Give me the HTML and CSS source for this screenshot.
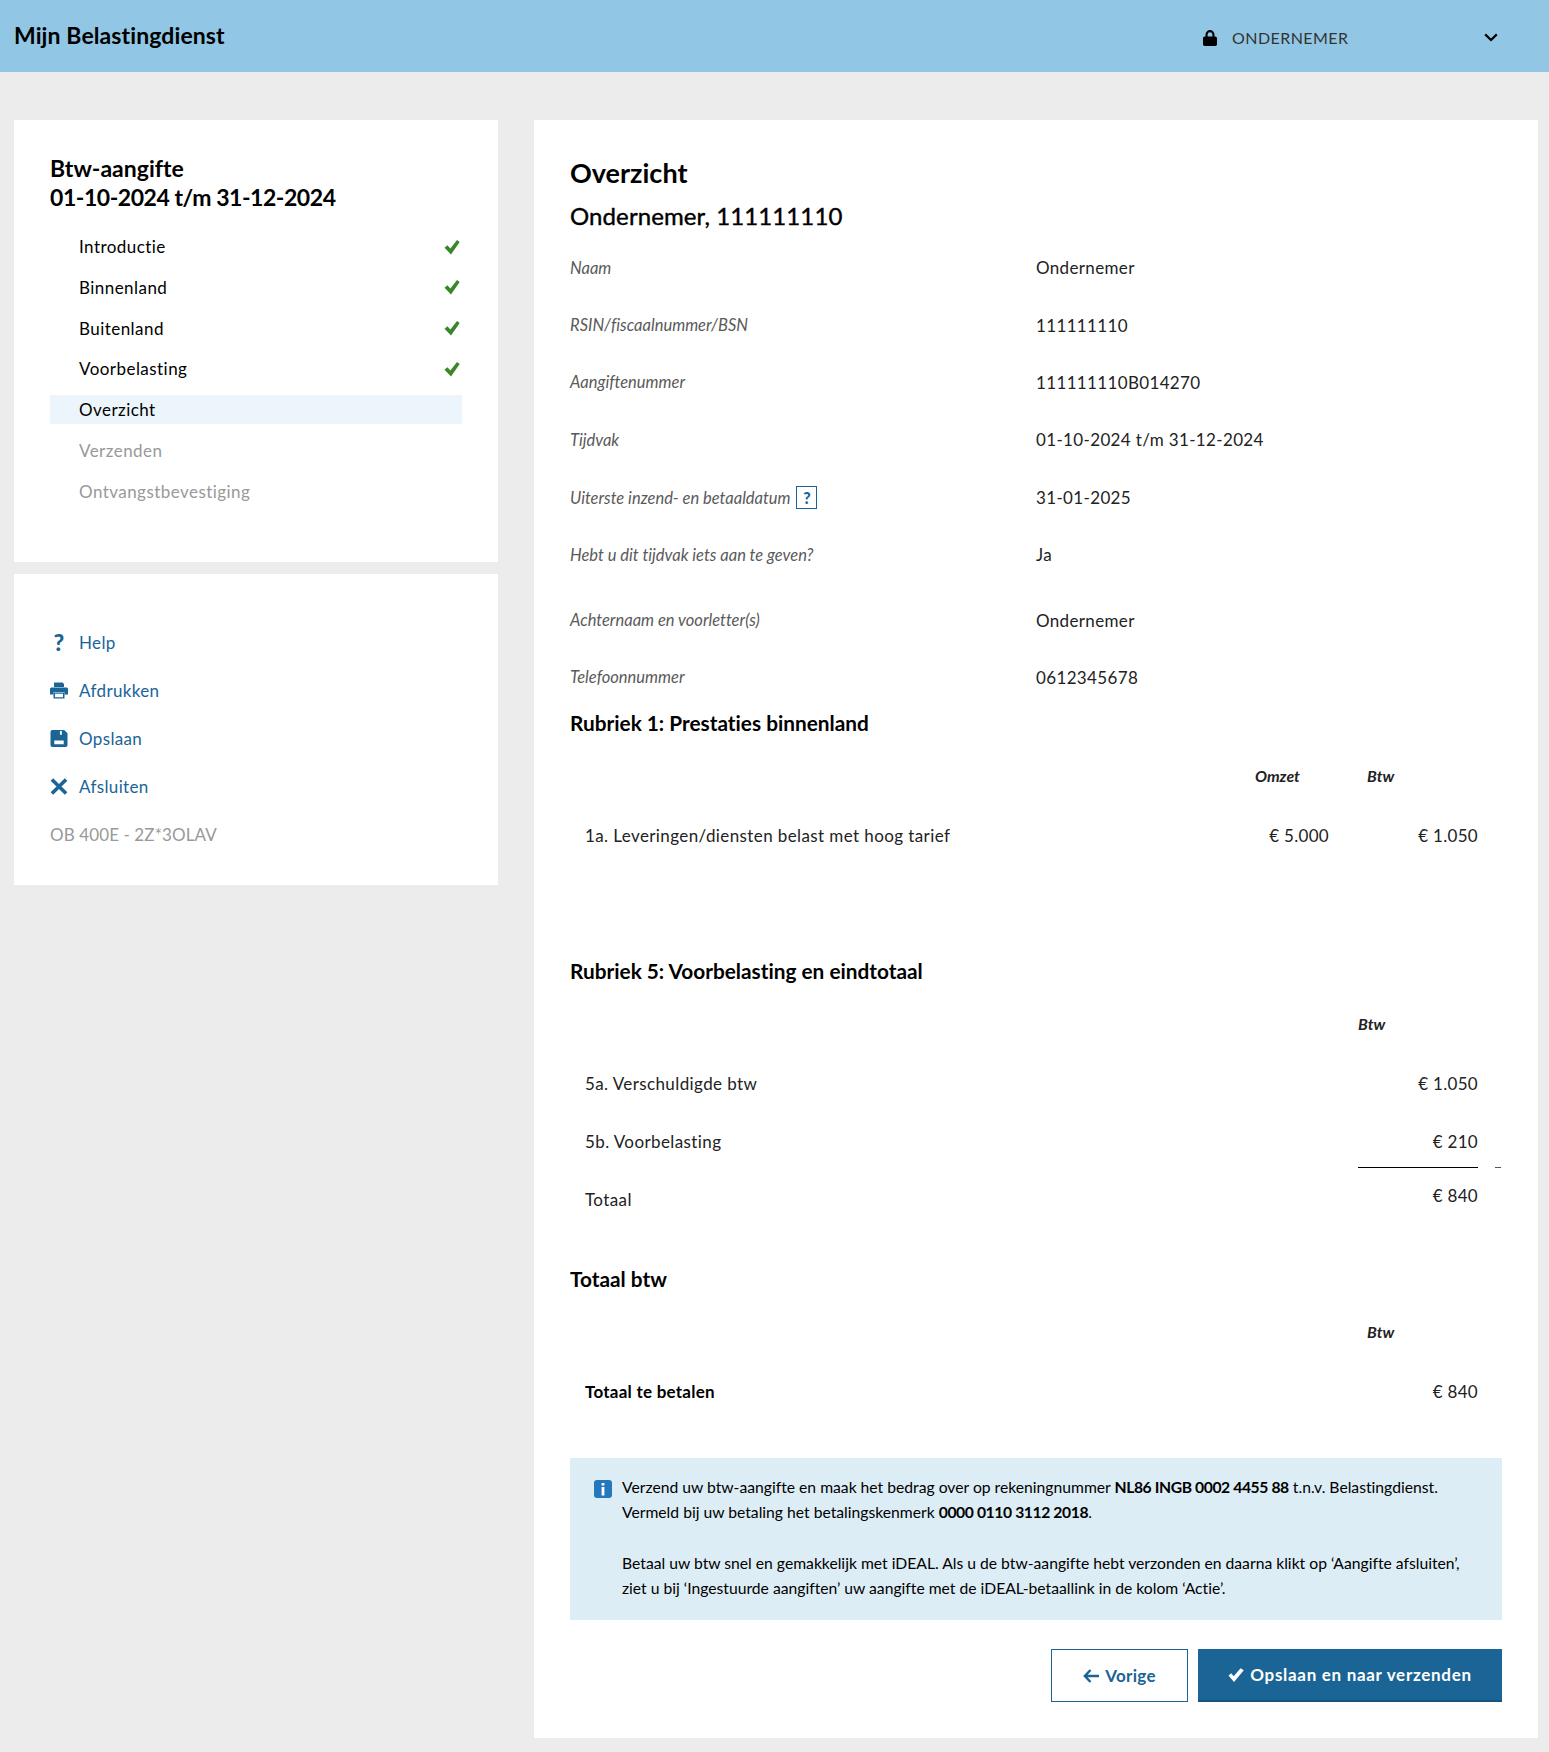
FILE: index.html
```html
<!DOCTYPE html>
<html lang="nl">
<head>
<meta charset="utf-8">
<title>Mijn Belastingdienst</title>
<link rel="stylesheet" href="styles.css">
</head>
<body>
<header class="topbar">
  <div class="brand">Mijn Belastingdienst</div>
  <div class="account">
    <svg class="lock" viewBox="0 0 14 16"><path d="M2.500 7V4.600a4.500 4.500 0 0 1 9 0V7H9.400V4.600a2.400 2.400 0 0 0-4.800 0V7z"/><rect x="0" y="6.500" width="14" height="9.500" rx="1.800"/></svg>
    <span class="account-name">ONDERNEMER</span>
    <svg class="chev" viewBox="0 0 14 9"><path d="M1.200 1.400 7 7l5.800-5.600" fill="none" stroke="#000" stroke-width="2.200"/></svg>
  </div>
</header>
<div class="layout">
  <aside class="sidebar">
    <section class="card nav-card">
      <h2 class="nav-title">Btw-aangifte<br><span class="nav-date">01-10-2024 t/m 31-12-2024</span></h2>
      <ul class="steps">
        <li class="step"><span>Introductie</span><svg class="tick" viewBox="0 0 16 16"><path d="M0.500 8.800 3.400 6.300l3 3.300L13 1l2.700 1.900L7 15.500z"/></svg></li>
        <li class="step"><span>Binnenland</span><svg class="tick" viewBox="0 0 16 16"><path d="M0.500 8.800 3.400 6.300l3 3.300L13 1l2.700 1.900L7 15.500z"/></svg></li>
        <li class="step"><span>Buitenland</span><svg class="tick" viewBox="0 0 16 16"><path d="M0.500 8.800 3.400 6.300l3 3.300L13 1l2.700 1.900L7 15.500z"/></svg></li>
        <li class="step"><span>Voorbelasting</span><svg class="tick" viewBox="0 0 16 16"><path d="M0.500 8.800 3.400 6.300l3 3.300L13 1l2.700 1.900L7 15.500z"/></svg></li>
        <li class="step step-current"><span>Overzicht</span></li>
        <li class="step step-off"><span>Verzenden</span></li>
        <li class="step step-off"><span>Ontvangstbevestiging</span></li>
      </ul>
    </section>
    <section class="card tools-card">
      <a class="tool"><span class="tool-icon tool-q">?</span>Help</a>
      <a class="tool"><svg class="tool-icon" viewBox="0 0 18 16"><path d="M4 0h8.500L14 1.500V4.500H4z"/><path fill-rule="evenodd" d="M1.500 5h15A1.500 1.500 0 0 1 18 6.500V12h-3.500V9.500h-11V12H0V6.500A1.500 1.500 0 0 1 1.500 5z"/><path fill-rule="evenodd" d="M3.500 10h11v6h-11zm1.500 1.300v3.400h8v-3.400z"/></svg>Afdrukken</a>
      <a class="tool"><svg class="tool-icon" viewBox="0 0 18 18"><path fill-rule="evenodd" d="M2 0h12.500L18 3.500V16a2 2 0 0 1-2 2H2a2 2 0 0 1-2-2V2a2 2 0 0 1 2-2zm8 1v4h2V1zM4 11v4h10v-4z"/></svg>Opslaan</a>
      <a class="tool"><svg class="tool-icon" viewBox="0 0 18 18"><path d="M1.500 1.500 16.500 16.500M16.500 1.500 1.500 16.500" fill="none" stroke="#1a6496" stroke-width="3.800"/></svg>Afsluiten</a>
      <div class="form-code">OB 400E - 2Z*3OLAV</div>
    </section>
  </aside>
  <main class="card content">
    <h1 class="page-title">Overzicht</h1>
    <h2 class="subject">Ondernemer, 111111110</h2>
    <dl class="facts">
      <div class="fact"><dt>Naam</dt><dd>Ondernemer</dd></div>
      <div class="fact"><dt>RSIN/fiscaalnummer/BSN</dt><dd>111111110</dd></div>
      <div class="fact"><dt>Aangiftenummer</dt><dd>111111110B014270</dd></div>
      <div class="fact"><dt>Tijdvak</dt><dd>01-10-2024 t/m 31-12-2024</dd></div>
      <div class="fact"><dt>Uiterste inzend- en betaaldatum <span class="hint">?</span></dt><dd>31-01-2025</dd></div>
      <div class="fact fact-gap"><dt>Hebt u dit tijdvak iets aan te geven?</dt><dd>Ja</dd></div>
      <div class="fact"><dt>Achternaam en voorletter(s)</dt><dd>Ondernemer</dd></div>
      <div class="fact"><dt>Telefoonnummer</dt><dd>0612345678</dd></div>
    </dl>

    <h3 class="section-title">Rubriek 1: Prestaties binnenland</h3>
    <div class="tbl tbl-two">
      <div></div><div class="th">Omzet</div><div class="th th-btw">Btw</div>
      <div class="cell">1a. Leveringen/diensten belast met hoog tarief</div><div class="cell num">€ 5.000</div><div class="cell num">€ 1.050</div>
    </div>

    <h3 class="section-title section-far">Rubriek 5: Voorbelasting en eindtotaal</h3>
    <div class="tbl tbl-one">
      <div></div><div class="th">Btw</div>
      <div class="cell">5a. Verschuldigde btw</div><div class="cell num">€ 1.050</div>
      <div class="cell">5b. Voorbelasting</div><div class="cell num cell-sum">€ 210</div>
      <div class="cell">Totaal</div><div class="cell num cell-total">€ 840</div>
    </div>

    <h3 class="section-title section-mid">Totaal btw</h3>
    <div class="tbl tbl-one">
      <div></div><div class="th th-total">Btw</div>
      <div class="cell cell-strong">Totaal te betalen</div><div class="cell num">€ 840</div>
    </div>

    <div class="notice">
      <svg class="notice-icon" viewBox="0 0 18 18"><rect width="18" height="18" rx="3" fill="#2678bd"/><rect x="7.600" y="3" width="2.800" height="2.500" fill="#fff"/><rect x="7.600" y="7" width="2.800" height="8.500" fill="#fff"/></svg>
      <div class="notice-text">
        <p>Verzend uw btw-aangifte en maak het bedrag over op rekeningnummer <b>NL86 INGB 0002 4455 88</b> t.n.v. Belastingdienst.<br>Vermeld bij uw betaling het betalingskenmerk <b>0000 0110 3112 2018</b>.</p>
        <p>Betaal uw btw snel en gemakkelijk met iDEAL. Als u de btw-aangifte hebt verzonden en daarna klikt op ‘Aangifte afsluiten’,<br>ziet u bij ‘Ingestuurde aangiften’ uw aangifte met de iDEAL-betaallink in de kolom ‘Actie’.</p>
      </div>
    </div>

    <div class="actions">
      <button class="btn btn-back"><svg class="btn-icon" viewBox="0 0 16 14"><path d="M7.500 1 1.800 7l5.700 6M2 7h14" fill="none" stroke="#1a6496" stroke-width="2.400"/></svg>Vorige</button>
      <button class="btn btn-next"><svg class="btn-icon" viewBox="0 0 16 14"><path d="M0.500 7.500 3.200 5.300l2.500 3L12.600 0.300 15.800 2.300 6 14z" fill="#fff"/></svg>Opslaan en naar verzenden</button>
    </div>
  </main>
</div>
</body>
</html>
```
FILE: styles.css
```css
* { box-sizing: border-box; }
html, body { margin: 0; padding: 0; }
body {
  background: #ececec;
  color: #000;
  font-family: "Lato", "Noto Sans", sans-serif;
  font-size: 17px;
  font-variant-ligatures: none;
  height: 1752px;
}
h1, h2, h3, p, ul, dl, dd { margin: 0; padding: 0; }
ul { list-style: none; }

.topbar {
  height: 72px;
  background: #91c7e4;
  display: flex;
  align-items: center;
  justify-content: space-between;
  padding: 0 51px 0 14px;
}
.brand { font-size: 23px; font-weight: 700; letter-spacing: 0.1px; margin-top: -2px; }
.account { display: flex; align-items: center; margin-top: 3px; }
.lock { width: 14px; height: 16px; fill: #000; margin-right: 15px; }
.account-name { font-size: 16px; letter-spacing: 0.45px; color: #333; width: 252px; }
.chev { width: 14px; height: 9px; }

.layout {
  display: flex;
  align-items: flex-start;
  gap: 36px;
  padding: 48px 11px 14px 14px;
}
.card { background: #fff; }
.sidebar { width: 484px; display: flex; flex-direction: column; gap: 12px; }

.nav-card { padding: 34px 36px 56px; }
.nav-title { font-size: 23px; line-height: 29px; font-weight: 700; }
.nav-date { letter-spacing: -0.45px; }
.steps { margin-top: 20px; display: flex; flex-direction: column; gap: 11.8px; }
.step {
  height: 29px;
  padding: 0 2px 0 29px;
  display: flex;
  align-items: center;
  justify-content: space-between;
  letter-spacing: 0.45px;
}
.step-current { background: #ecf5fb; }
.step-off { color: #999; }
.tick { width: 16px; height: 16px; fill: #39872a; }

.tools-card { padding: 57px 36px 38px; display: flex; flex-direction: column; gap: 24px; }
.tool {
  height: 24px;
  display: flex;
  align-items: center;
  color: #1a6496;
  letter-spacing: 0.35px;
}
.tool-icon { width: 18px; height: 17px; margin-right: 11px; fill: #1a6496; flex: none; }
.tool-q { font-weight: 900; font-size: 23px; text-align: center; line-height: 17px; }
.form-code { height: 24px; line-height: 24px; color: #999; letter-spacing: 0.1px; }

.content { width: 1004px; height: 1618px; padding: 36px; }
.page-title { font-size: 27px; line-height: 34px; font-weight: 700; }
.subject {
  font-size: 24px;
  line-height: 32px;
  font-weight: 400;
  margin-top: 10px;
  letter-spacing: 0.1px;
  -webkit-text-stroke: 0.4px #000;
}

.facts { margin-top: 7px; }
.fact {
  height: 57.4px;
  display: grid;
  grid-template-columns: 466px 1fr;
  align-items: center;
}
.fact-gap { height: 65.4px; padding-bottom: 8px; }
.fact dt { font-style: italic; color: #5a5a5a; font-size: 16.5px; }
.fact dd { color: #222; letter-spacing: 0.35px; }
.hint {
  display: inline-block;
  width: 21px;
  height: 23px;
  border: 1px solid #1a6496;
  color: #1a6496;
  font-style: normal;
  font-weight: 900;
  font-size: 16px;
  line-height: 21px;
  text-align: center;
  margin-left: 2px;
}

.section-title { font-size: 20.8px; line-height: 26px; font-weight: 700; margin-top: 4px; }
.section-far { margin-top: 94px; }
.section-mid { margin-top: 38px; }

.tbl { display: grid; margin-top: 12px; padding: 0 24px 0 15px; grid-auto-rows: 58px; align-items: center; }
.tbl-two { grid-template-columns: 1fr 74px 149px; }
.tbl-one { grid-template-columns: 1fr 120px; }
.th { font-style: italic; font-weight: 700; font-size: 16px; color: #222; margin-top: -3px; }
.th-btw { padding-left: 38px; }
.th-total { padding-left: 9px; }
.cell { color: #222; letter-spacing: 0.4px; }
.num { text-align: right; letter-spacing: 0.3px; }
.cell-strong { font-weight: 700; color: #000; letter-spacing: 0.25px; }
.cell-sum {
  position: relative;
  align-self: start;
  height: 56px;
  padding-top: 3px;
  display: flex;
  align-items: center;
  justify-content: flex-end;
  border-bottom: 1px solid #000;
}
.cell-sum::after {
  content: "";
  position: absolute;
  right: -23px;
  bottom: -1px;
  width: 6px;
  height: 1px;
  background: #555;
}
.cell-total { padding-bottom: 8px; }

.notice {
  margin-top: 38px;
  height: 162px;
  padding: 17px 24px 0;
  background: #ddedf5;
  display: flex;
  gap: 11px;
}
.notice-icon { width: 18px; height: 18px; margin-top: 5px; flex: none; margin-right: -1px; }
.notice-text { font-size: 15.7px; line-height: 25px; flex: 1; }
.notice-text p + p { margin-top: 25.5px; }
.notice-text b { font-weight: 700; letter-spacing: -0.4px; }

.actions { margin-top: 29px; display: flex; justify-content: flex-end; gap: 10px; }
.btn {
  height: 53px;
  font-family: inherit;
  font-size: 17px;
  font-weight: 700;
  letter-spacing: 0.3px;
  display: flex;
  align-items: center;
  justify-content: center;
  gap: 6px;
}
.btn-back { width: 137px; background: #fff; color: #1a6496; border: 1px solid #1a6496; }
.btn-next { width: 304px; background: #1a6496; color: #fff; border: 0; border-bottom: 2px solid #185480; letter-spacing: 0.7px; }
.btn-icon { width: 16px; height: 14px; }
```
